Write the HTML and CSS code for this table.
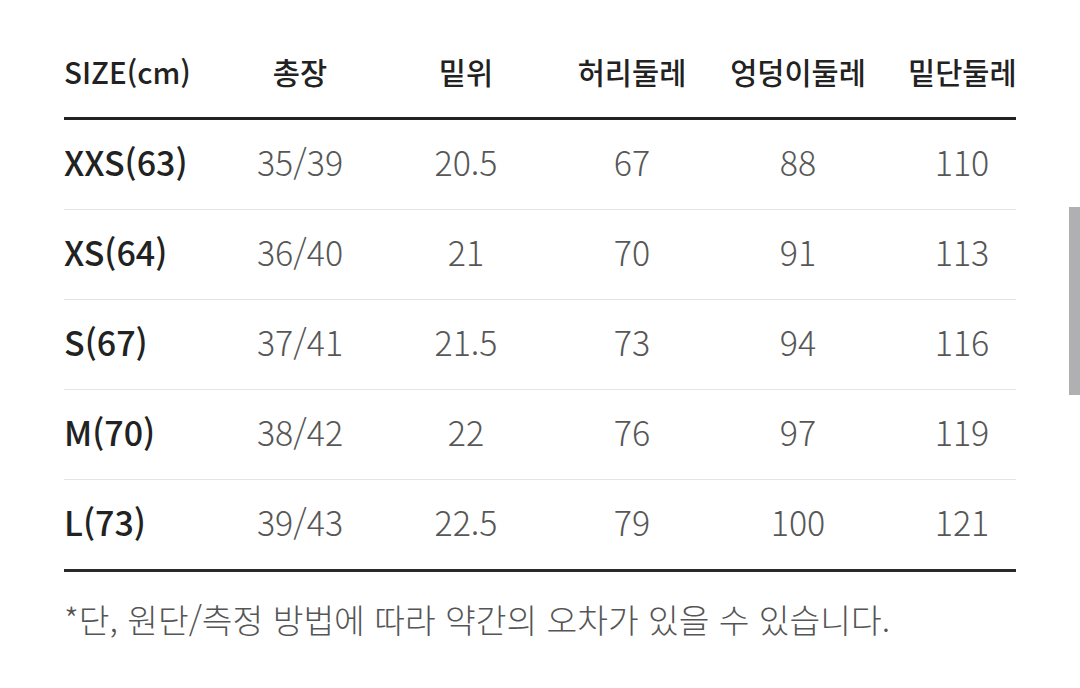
FILE: index.html
```html
<!DOCTYPE html>
<html lang="ko">
<head>
<meta charset="utf-8">
<title>사이즈표</title>
<link rel="stylesheet" href="styles.css">
</head>
<body>
<main class="page">
  <div class="table">
    <div class="row head">
      <div class="cell first">SIZE(cm)</div>
      <div class="cell">총장</div>
      <div class="cell">밑위</div>
      <div class="cell">허리둘레</div>
      <div class="cell">엉덩이둘레</div>
      <div class="cell last">밑단둘레</div>
    </div>
    <div class="row">
      <div class="cell first">XXS(63)</div>
      <div class="cell">35/39</div>
      <div class="cell">20.5</div>
      <div class="cell">67</div>
      <div class="cell">88</div>
      <div class="cell last">110</div>
    </div>
    <div class="row">
      <div class="cell first">XS(64)</div>
      <div class="cell">36/40</div>
      <div class="cell">21</div>
      <div class="cell">70</div>
      <div class="cell">91</div>
      <div class="cell last">113</div>
    </div>
    <div class="row">
      <div class="cell first">S(67)</div>
      <div class="cell">37/41</div>
      <div class="cell">21.5</div>
      <div class="cell">73</div>
      <div class="cell">94</div>
      <div class="cell last">116</div>
    </div>
    <div class="row">
      <div class="cell first">M(70)</div>
      <div class="cell">38/42</div>
      <div class="cell">22</div>
      <div class="cell">76</div>
      <div class="cell">97</div>
      <div class="cell last">119</div>
    </div>
    <div class="row">
      <div class="cell first">L(73)</div>
      <div class="cell">39/43</div>
      <div class="cell">22.5</div>
      <div class="cell">79</div>
      <div class="cell">100</div>
      <div class="cell last">121</div>
    </div>
  </div>
  <p class="note">*단, 원단/측정 방법에 따라 약간의 오차가 있을 수 있습니다.</p>
</main>
<div class="scrollbar"></div>
</body>
</html>
```
FILE: styles.css
```css
html, body {
  margin: 0;
  padding: 0;
  background: #ffffff;
}
body {
  font-family: "Noto Sans CJK KR", "Noto Sans", sans-serif;
  width: 1080px;
  height: 688px;
  overflow: hidden;
}
.page {
  padding: 27px 0 0 64px;
}
.table {
  width: 952px;
  border-bottom: 3px solid #2a2a2a;
}
.row {
  display: grid;
  grid-template-columns: 153px 166px 166px 166px 166px 135px;
  height: 89px;
  align-items: center;
  border-bottom: 1px solid #e4e4e6;
}
.row:last-child {
  border-bottom: none;
}
.row.head {
  height: 90px;
  border-bottom: 3px solid #222222;
}
.cell {
  text-align: center;
  font-size: 34px;
  font-weight: 300;
  color: #575757;
  line-height: 1;
  white-space: nowrap;
  padding-bottom: 6px;
}
.cell.last {
  padding-left: 27px;
}
.cell.first {
  text-align: left;
  color: #222222;
  font-weight: 500;
}
.head .cell {
  font-size: 29.5px;
  font-weight: 500;
  color: #222222;
  padding-bottom: 0;
}
.note {
  margin: 27px 0 0 0;
  font-size: 33.4px;
  font-weight: 300;
  color: #555555;
  line-height: 1.2;
}
.scrollbar {
  position: fixed;
  right: 0;
  top: 207px;
  width: 11px;
  height: 188px;
  background: #b0afb2;
}
```
